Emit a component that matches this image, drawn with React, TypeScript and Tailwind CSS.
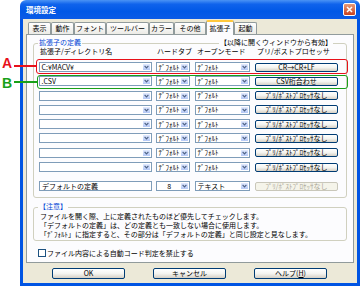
import React from "react";

const HALF_DEFAULT = "ﾃﾞﾌｫﾙﾄ";
const NO_PROC = "ﾌﾟﾘ/ﾎﾟｽﾄﾌﾟﾛｾｯｻなし";

type Row = { ext: string; proc: string; mark?: "red" | "green" };

const rows: Row[] = [
  { ext: "C:¥MACV¥", proc: "CR→CR+LF", mark: "red" },
  { ext: ".CSV", proc: "CSV桁合わせ", mark: "green" },
  { ext: "", proc: NO_PROC },
  { ext: "", proc: NO_PROC },
  { ext: "", proc: NO_PROC },
  { ext: "", proc: NO_PROC },
  { ext: "", proc: NO_PROC },
  { ext: "", proc: NO_PROC },
];

function Arrow() {
  return (
    <span className="flex w-[9px] shrink-0 items-center justify-center border border-white bg-gradient-to-b from-[#E2EAFE] to-[#B4C8F6]">
      <svg width="5" height="4" viewBox="0 0 5 4">
        <path d="M0.6 0.8 2.5 2.8 4.4 0.8" fill="none" stroke="#4D6185" strokeWidth="1.2" />
      </svg>
    </span>
  );
}

function Combo({ text = "", w, center = false }: { text?: string; w: string; center?: boolean }) {
  return (
    <div className={`flex h-[10px] shrink-0 items-stretch border border-[#7F9DB9] bg-white ${w}`}>
      <span
        className={`flex min-w-0 flex-1 items-center whitespace-nowrap pl-[1.5px] text-[7px] leading-none ${
          center ? "justify-center" : ""
        }`}
      >
        {text}
      </span>
      <Arrow />
    </div>
  );
}

function XpButton({ label, w, h = "h-[9px]", disabled = false }: { label: React.ReactNode; w: string; h?: string; disabled?: boolean }) {
  return (
    <div
      className={`flex shrink-0 items-center justify-center rounded-[2px] border text-[7px] leading-none ${w} ${h} ${
        disabled
          ? "border-[#C9C7BA] bg-[#F5F4EA] text-[#ACA899]"
          : "border-[#003C74] bg-gradient-to-b from-white via-[#F4F4F0] to-[#D6D0C5] text-black"
      }`}
    >
      {label}
    </div>
  );
}

function Tab({ label, w, active = false }: { label: string; w: string; active?: boolean }) {
  if (active) {
    return (
      <div className={`relative z-10 -mb-px flex h-[15px] items-center justify-center rounded-t-[2px] border border-b-0 border-[#919B9C] border-t-[2px] border-t-[#FFC83C] bg-[#FCFCFE] ${w}`}>
        <span className="text-[7px] leading-none">{label}</span>
      </div>
    );
  }
  return (
    <div className={`flex h-[12px] items-center justify-center rounded-t-[2px] border border-b-0 border-[#919B9C] bg-gradient-to-b from-white to-[#ECEBE6] ${w}`}>
      <span className="text-[7px] leading-none">{label}</span>
    </div>
  );
}

export default function App() {
  return (
    <div className="relative flex h-[286px] w-[360px] overflow-hidden bg-white font-['Noto_Sans_CJK_JP',sans-serif] text-black">
      {/* 注釈 A / B */}
      <div className="absolute left-[2px] top-[56px] z-20 font-['Liberation_Sans',sans-serif] text-[14px] font-bold leading-none text-[#E8101A]">A</div>
      <div className="absolute left-[14px] top-[65px] z-20 h-[1.5px] w-[23px] bg-[#E8101A]" />
      <div className="absolute left-[2px] top-[76px] z-20 font-['Liberation_Sans',sans-serif] text-[14px] font-bold leading-none text-[#18A018]">B</div>
      <div className="absolute left-[14px] top-[81px] z-20 h-[1.5px] w-[24px] bg-[#18A018]" />

      <div className="w-[20px] shrink-0" />

      {/* window */}
      <div className="flex h-[286px] w-[340px] shrink-0 flex-col">
        <div className="flex h-[19px] shrink-0 items-center justify-between rounded-t-[6px] bg-[linear-gradient(to_bottom,#4A93F5_0%,#0F63EC_22%,#0058E6_60%,#0A5BE6_100%)] pl-[6px] pr-[4px]">
          <span className="text-[7.5px] font-bold leading-none text-white">環境設定</span>
          <div className="flex h-[13px] w-[13px] items-center justify-center rounded-[2px] border border-white bg-gradient-to-b from-[#E89A78] to-[#C8401B]">
            <svg width="7" height="7" viewBox="0 0 7 7">
              <path d="M1 1 6 6M6 1 1 6" stroke="white" strokeWidth="1.5" />
            </svg>
          </div>
        </div>

        <div className="flex flex-1 flex-col border-x-[3px] border-b-[3px] border-[#0054E3] bg-[#ECE9D8]">
          {/* tabs */}
          <div className="ml-[5px] mt-[1px] flex items-end">
            <Tab label="表示" w="w-[23px]" />
            <Tab label="動作" w="w-[23px]" />
            <Tab label="フォント" w="w-[32px]" />
            <Tab label="ツールバー" w="w-[43px]" />
            <Tab label="カラー" w="w-[25px]" />
            <Tab label="その他" w="w-[32px]" />
            <Tab label="拡張子" w="w-[28px]" active />
            <Tab label="起動" w="w-[23px]" />
          </div>

          {/* panel */}
          <div className="mx-[3px] flex h-[229px] flex-col border border-[#919B9C] bg-[#FCFCFE]">
            {/* 拡張子の定義 */}
            <div className="relative mx-[6px] mt-[8px] flex h-[155px] flex-col rounded-[3px] border border-[#D0D0BF] pl-[5px] pt-[3px]">
              <span className="absolute -top-[5px] left-[4px] bg-[#FCFCFE] px-[1px] text-[7px] leading-none text-[#0046D5]">拡張子の定義</span>
              <span className="absolute -top-[5px] right-[13px] bg-[#FCFCFE] px-[1px] text-[7px] leading-none">【以降に開くウィンドウから有効】</span>

              <div className="flex h-[8px] items-center text-[7px] leading-none">
                <span className="w-[118px] pl-[1px]">拡張子/ディレクトリ名</span>
                <span className="w-[40px]">ハードタブ</span>
                <span className="w-[60px]">オープンモード</span>
                <span>プリ/ポストプロセッサ</span>
              </div>

              <div className="mt-[7px] flex flex-col gap-[4.3px]">
                {rows.map((r, i) => (
                  <div key={i} className="relative flex h-[10px] items-center">
                    <Combo text={r.ext} w="w-[113px]" />
                    <div className="ml-[4px]">
                      <Combo text={HALF_DEFAULT} w="w-[34px]" />
                    </div>
                    <div className="ml-[5px]">
                      <Combo text={HALF_DEFAULT} w="w-[55px]" />
                    </div>
                    <div className="ml-[5px]">
                      <XpButton label={r.proc} w="w-[83px]" />
                    </div>
                    {r.mark === "red" && (
                      <div className="absolute -bottom-[2px] -left-[3px] -right-[2px] -top-[3px] rounded-[3px] border-[1.5px] border-[#E8101A]" />
                    )}
                    {r.mark === "green" && (
                      <div className="absolute -bottom-[3px] -left-[2px] -right-[2px] -top-[1px] rounded-[3px] border-[1.5px] border-[#18A018]" />
                    )}
                  </div>
                ))}
              </div>

              <div className="mt-[9px] flex h-[10px] items-center">
                <div className="flex h-[10px] w-[113px] items-center border border-[#7F9DB9] bg-white pl-[2px] text-[7px] leading-none">
                  デフォルトの定義
                </div>
                <div className="ml-[4px]">
                  <Combo text="8" w="w-[34px]" center />
                </div>
                <div className="ml-[5px]">
                  <Combo text="テキスト" w="w-[55px]" />
                </div>
                <div className="ml-[5px]">
                  <XpButton label={NO_PROC} w="w-[83px]" disabled />
                </div>
              </div>
            </div>

            {/* 注意 */}
            <div className="relative mx-[6px] mt-[9px] flex h-[34px] flex-col justify-center gap-[1px] rounded-[3px] border border-[#D0D0BF] pl-[6px] pt-[2px] text-[7px] leading-[8px]">
              <span className="absolute -top-[5px] left-[4px] bg-[#FCFCFE] px-[1px] leading-none text-[#0046D5]">【注意】</span>
              <p>ファイルを開く際、上に定義されたものほど優先してチェックします。</p>
              <p>「デフォルトの定義」は、どの定義とも一致しない場合に使用します。</p>
              <p>「ﾃﾞﾌｫﾙﾄ」に指定すると、その部分は「デフォルトの定義」と同じ設定と見なします。</p>
            </div>

            <label className="ml-[11px] mt-[8px] flex items-center gap-[1px] text-[7px] leading-none">
              <span className="h-[8px] w-[8px] border border-[#1C5180] bg-white" />
              <span>ファイル内容による自動コード判定を禁止する</span>
            </label>
          </div>

          {/* buttons */}
          <div className="mt-[5px] flex gap-[28px] pl-[29px]">
            <XpButton label="OK" w="w-[73px]" h="h-[11px]" />
            <XpButton label="キャンセル" w="w-[73px]" h="h-[11px]" />
            <XpButton
              label={
                <span>
                  ヘルプ(<span className="underline">H</span>)
                </span>
              }
              w="w-[73px]"
              h="h-[11px]"
            />
          </div>
        </div>
      </div>
    </div>
  );
}
